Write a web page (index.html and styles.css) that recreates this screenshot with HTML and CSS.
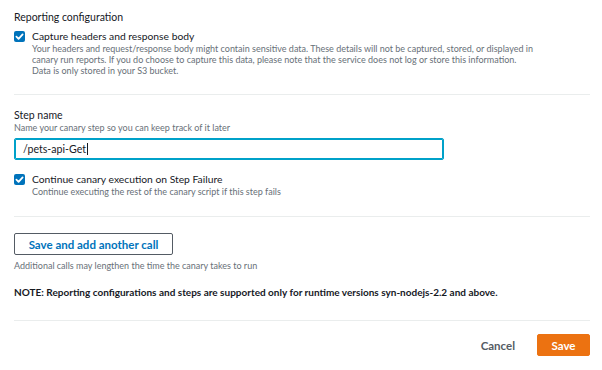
FILE: index.html
```html
<!DOCTYPE html>
<html lang="en">
<head>
    <meta charset="UTF-8">
    <title>Reporting configuration</title>
    <link rel="stylesheet" href="styles.css">
</head>
<body>
    <div class="panel">
        <section class="block block-report">
            <div class="block-title">Reporting configuration</div>
            <label class="check-row">
                <span class="checkbox">
                    <svg viewBox="0 0 12 12"><path d="M2.6 6.2 L5 8.6 L9.4 3.6" stroke="#fff" stroke-width="1.9" fill="none" stroke-linecap="round" stroke-linejoin="round"/></svg>
                </span>
                <span class="check-text">
                    <span class="check-label">Capture headers and response body</span>
                    <span class="check-desc">Your headers and request/response body might contain sensitive data. These details will not be captured, stored, or displayed in canary run reports. If you do choose to capture this data, please note that the service does not log or store this information. Data is only stored in your S3 bucket.</span>
                </span>
            </label>
        </section>

        <section class="block block-step">
            <div class="block-title">Step name</div>
            <div class="hint">Name your canary step so you can keep track of it later</div>
            <div class="text-input">/pets-api-Get<span class="caret"></span></div>

            <label class="check-row check-row-step">
                <span class="checkbox">
                    <svg viewBox="0 0 12 12"><path d="M2.6 6.2 L5 8.6 L9.4 3.6" stroke="#fff" stroke-width="1.9" fill="none" stroke-linecap="round" stroke-linejoin="round"/></svg>
                </span>
                <span class="check-text">
                    <span class="check-label">Continue canary execution on Step Failure</span>
                    <span class="check-desc">Continue executing the rest of the canary script if this step fails</span>
                </span>
            </label>
        </section>

        <section class="block block-calls">
            <button class="btn-secondary">Save and add another call</button>
            <div class="hint hint-calls">Additional calls may lengthen the time the canary takes to run</div>
            <div class="note">NOTE: Reporting configurations and steps are supported only for runtime versions syn-nodejs-2.2 and above.</div>
        </section>

        <div class="actions">
            <button class="btn-link">Cancel</button>
            <button class="btn-primary">Save</button>
        </div>
    </div>
</body>
</html>
```

FILE: styles.css
```css
body {
    margin: 0;
    background-color: #fff;
    font-family: Lato, "Liberation Sans", sans-serif;
    color: #16191f;
}

.panel {
    padding: 0 12px 0 14px;
}

.block {
    border-bottom: 1px solid #eaeded;
}

.block-title {
    font-size: 10.5px;
    line-height: 14px;
    color: #16191f;
}

.block-report {
    padding-top: 10px;
    padding-bottom: 18px;
}

.check-row {
    display: flex;
    gap: 7px;
    margin-top: 5px;
}

.checkbox {
    flex: none;
    width: 11px;
    height: 11px;
    margin-top: 2px;
    border-radius: 2px;
    background-color: #0073bb;
    display: flex;
}

.checkbox svg {
    width: 11px;
    height: 11px;
}

.check-text {
    display: flex;
    flex-direction: column;
}

.check-label {
    font-size: 10.3px;
    line-height: 14px;
}

.check-desc {
    font-size: 9px;
    line-height: 11px;
    color: #687078;
    max-width: 505px;
}

.block-step {
    padding-top: 13px;
    padding-bottom: 19px;
}

.hint {
    font-size: 9px;
    line-height: 12px;
    color: #687078;
}

.text-input {
    box-sizing: border-box;
    margin-top: 4px;
    width: 430px;
    height: 22px;
    border: 1px solid #00a1c9;
    box-shadow: inset 0 0 0 1px #00a1c9;
    border-radius: 2px;
    padding: 0 8px;
    font-size: 10.6px;
    line-height: 20px;
    color: #16191f;
}

.caret {
    display: inline-block;
    width: 1px;
    height: 12px;
    margin-left: 1px;
    background-color: #16191f;
    vertical-align: -2px;
}

.check-row-step {
    margin-top: 12px;
}

.block-calls {
    padding-top: 16px;
    padding-bottom: 21px;
}

.btn-secondary {
    display: block;
    width: 159px;
    height: 22px;
    border: 1px solid #545b64;
    border-radius: 2px;
    background-color: #fff;
    color: #0073bb;
    font-family: inherit;
    font-weight: bold;
    font-size: 11.5px;
    padding: 0;
}

.hint-calls {
    margin-top: 5px;
}

.note {
    margin-top: 14px;
    font-size: 10px;
    line-height: 13px;
    font-weight: bold;
    color: #16191f;
}

.actions {
    display: flex;
    justify-content: flex-end;
    align-items: center;
    gap: 10px;
    padding-top: 13px;
}

.btn-link {
    border: none;
    background: none;
    font-family: inherit;
    font-weight: bold;
    font-size: 11.5px;
    color: #545b64;
    padding: 0 12px;
}

.btn-primary {
    width: 53px;
    height: 22px;
    border: 1px solid #ec7211;
    border-radius: 2px;
    background-color: #ec7211;
    color: #fff;
    font-family: inherit;
    font-weight: bold;
    font-size: 11.5px;
    padding: 0;
}
```
